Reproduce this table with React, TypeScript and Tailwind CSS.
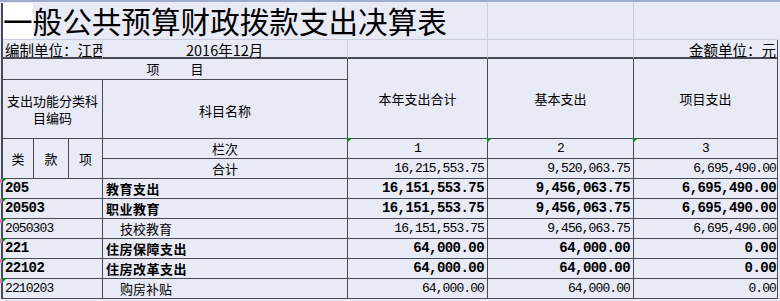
import React from "react";

const CJK = "font-['Noto_Sans_CJK_SC','Noto_Sans',sans-serif]";
const MONO = "font-['Liberation_Mono','DejaVu_Sans_Mono',monospace]";
const D = "border-[#474b57]";
const L = "border-[#c9cde0]";

function Tri() {
  return (
    <div className="absolute -left-px -top-px w-0 h-0 border-t-[5px] border-r-[5px] border-t-[#118a11] border-r-transparent" />
  );
}

function Pink() {
  return <div className="absolute -left-[3px] top-0 w-[2px] h-[4px] bg-[#e070d0]" />;
}

type Row = {
  code: string;
  name: string;
  a: string;
  b: string;
  c: string;
  bold: boolean;
};

const rows: Row[] = [
  { code: "205", name: "教育支出", a: "16,151,553.75", b: "9,456,063.75", c: "6,695,490.00", bold: true },
  { code: "20503", name: "职业教育", a: "16,151,553.75", b: "9,456,063.75", c: "6,695,490.00", bold: true },
  { code: "2050303", name: "技校教育", a: "16,151,553.75", b: "9,456,063.75", c: "6,695,490.00", bold: false },
  { code: "221", name: "住房保障支出", a: "64,000.00", b: "64,000.00", c: "0.00", bold: true },
  { code: "22102", name: "住房改革支出", a: "64,000.00", b: "64,000.00", c: "0.00", bold: true },
  { code: "2210203", name: "购房补贴", a: "64,000.00", b: "64,000.00", c: "0.00", bold: false },
];

export default function App() {
  const cell = `border-r border-b ${D} flex items-center justify-center text-[13px] text-black ${CJK}`;
  const numN = `${MONO} text-[13px] tracking-[-0.9px]`;
  const numB = `${MONO} text-[14px] font-bold tracking-[-0.55px]`;
  return (
    <div className="w-[780px] h-[301px] bg-[#e8eaf5] overflow-hidden">
      <div className="h-[3px] bg-[#e8eaf5] border-t-2 border-[#9fabcf]" />
      <div
        className={`ml-px border-l-2 ${D} grid grid-cols-[31px_35px_34px_245px_140px_146px_144px] grid-rows-[37px_19px_21px_59px_20px_20px_20px_20px_20px_20px_20px_20px]`}
      >
        {/* title row */}
        <div
          className={`col-span-5 border-r border-b ${L} bg-[linear-gradient(to_right,#ffffff_0,#ffffff_30px,#e8eaf5_30px)] flex items-center text-[29.6px] leading-[34px] text-black whitespace-nowrap ${CJK}`}
        >
          一般公共预算财政拨款支出决算表
        </div>
        <div className={`border-r border-b ${L}`} />
        <div className={`border-b ${L}`} />

        {/* unit row */}
        <div
          className={`col-span-3 border-r border-b-2 ${L} border-b-[#474b57] overflow-hidden whitespace-nowrap flex items-center pl-[2px] pt-[2px] text-[14.5px] leading-[16px] ${CJK}`}
        >
          编制单位：江西
        </div>
        <div
          className={`border-r border-b-2 ${L} border-b-[#474b57] flex items-center pl-[83px] pt-[2px] text-[14.5px] leading-[16px] whitespace-nowrap ${CJK}`}
        >
          2016年12月
        </div>
        <div className={`border-r border-b-2 ${L} border-b-[#474b57]`} />
        <div className={`border-r border-b-2 ${L} border-b-[#474b57]`} />
        <div
          className={`border-b-2 border-b-[#474b57] border-r ${D} flex items-center justify-end pr-[1px] pt-[2px] text-[14.5px] leading-[16px] whitespace-nowrap ${CJK}`}
        >
          金额单位：元
        </div>

        {/* header row 1 */}
        <div className={`${cell} col-span-4 gap-[31px]`}>
          <span>项</span>
          <span>目</span>
        </div>
        <div className={`${cell} row-span-2`}>本年支出合计</div>
        <div className={`${cell} row-span-2`}>基本支出</div>
        <div className={`${cell} row-span-2`}>项目支出</div>

        {/* header row 2 */}
        <div className={`${cell} col-span-3 text-center leading-[17px] px-[2px]`}>
          支出功能分类科目编码
        </div>
        <div className={`${cell} pt-[4px]`}>科目名称</div>

        {/* header row 3 */}
        <div className={`${cell} row-span-2`}>类</div>
        <div className={`${cell} row-span-2`}>款</div>
        <div className={`${cell} row-span-2`}>项</div>
        <div className={cell}>栏次</div>
        <div className={`${cell} relative`}>
          <Tri />
          <span className={numN}>1</span>
        </div>
        <div className={`${cell} relative`}>
          <Tri />
          <span className={numN}>2</span>
        </div>
        <div className={`${cell} relative`}>
          <Tri />
          <span className={numN}>3</span>
        </div>

        {/* total row */}
        <div className={cell}>合计</div>
        <div className={`${cell} !justify-end pr-[3px]`}>
          <span className={numN}>16,215,553.75</span>
        </div>
        <div className={`${cell} !justify-end pr-[3px]`}>
          <span className={numN}>9,520,063.75</span>
        </div>
        <div className={`${cell} !justify-end pr-[1px]`}>
          <span className={numN}>6,695,490.00</span>
        </div>

        {rows.map((r) => (
          <React.Fragment key={r.code}>
            <div className={`${cell} col-span-3 !justify-start pl-[2px] relative`}>
              <Tri />
              <Pink />
              <span className={r.bold ? numB : numN}>{r.code}</span>
            </div>
            <div
              className={`${cell} !justify-start ${
                r.bold ? "pl-[3px] font-bold tracking-[0.5px]" : "pl-[17px] text-[12.5px]"
              }`}
            >
              {r.name}
            </div>
            <div className={`${cell} !justify-end pr-[3px]`}>
              <span className={r.bold ? numB : numN}>{r.a}</span>
            </div>
            <div className={`${cell} !justify-end pr-[3px]`}>
              <span className={r.bold ? numB : numN}>{r.b}</span>
            </div>
            <div className={`${cell} !justify-end pr-[1px]`}>
              <span className={r.bold ? numB : numN}>{r.c}</span>
            </div>
          </React.Fragment>
        ))}
      </div>
    </div>
  );
}
